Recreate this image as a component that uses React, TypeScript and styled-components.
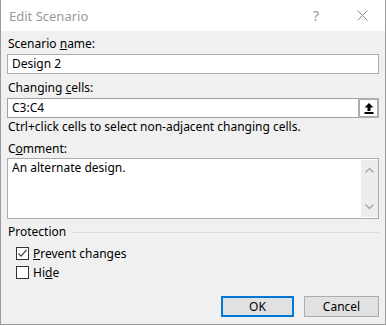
import React from 'react'
import styled, { createGlobalStyle } from 'styled-components'

const GlobalStyle = createGlobalStyle`
  html, body {
    margin: 0;
    padding: 0;
    background: #fff;
  }
  body {
    font-family: "Noto Sans", "Liberation Sans", sans-serif;
    font-size: 12px;
    color: #000;
  }
`

const UploadIcon = () => (
  <svg width="10" height="11" viewBox="0 0 10 11">
    <path d="M5 0 L9.5 4.5 L6.5 4.5 L6.5 8 L3.5 8 L3.5 4.5 L0.5 4.5 Z" fill="#000" />
    <rect x="0.5" y="9" width="9" height="2" fill="#000" />
  </svg>
)

const Chevron = ({ up }: { up?: boolean }) => (
  <svg width="9" height="6" viewBox="0 0 9 6">
    <path d={up ? 'M0.5 5.5 L4.5 1.5 L8.5 5.5' : 'M0.5 0.5 L4.5 4.5 L8.5 0.5'} stroke="#a6a6a6" strokeWidth="1.4" fill="none" />
  </svg>
)

const Check = () => (
  <svg width="11" height="11" viewBox="0 0 11 11">
    <path d="M1.5 5.5 L4 8.2 L9.5 2" stroke="#444" strokeWidth="1.2" fill="none" />
  </svg>
)

const App = () => {
  return (
    <>
      <GlobalStyle />
      <Dialog>
        <TitleBar>
          <Title>Edit Scenario</Title>
          <TitleButtons>
            <HelpGlyph>?</HelpGlyph>
            <svg width="11" height="11" viewBox="0 0 11 11">
              <path d="M0.5 0.5 L10.5 10.5 M10.5 0.5 L0.5 10.5" stroke="#8a8a8a" strokeWidth="1" fill="none" />
            </svg>
          </TitleButtons>
        </TitleBar>
        <Body>
          <Label>
            Scenario <u>n</u>ame:
          </Label>
          <TextBox>Design 2</TextBox>

          <Label $top={6}>
            Changing <u>c</u>ells:
          </Label>
          <RefBox>
            <RefValue>C3:C4</RefValue>
            <PickButton>
              <UploadIcon />
            </PickButton>
          </RefBox>
          <Hint>Ctrl+click cells to select non-adjacent changing cells.</Hint>

          <Label $top={6}>
            C<u>o</u>mment:
          </Label>
          <CommentBox>
            <CommentText>An alternate design.</CommentText>
            <ScrollBar>
              <Chevron up />
              <Chevron />
            </ScrollBar>
          </CommentBox>

          <GroupHeader>
            <span>Protection</span>
            <GroupLine />
          </GroupHeader>
          <CheckRow $top={4}>
            <CheckBox>
              <Check />
            </CheckBox>
            <span>
              <u>P</u>revent changes
            </span>
          </CheckRow>
          <CheckRow>
            <CheckBox />
            <span>
              Hi<u>d</u>e
            </span>
          </CheckRow>

          <Footer>
            <Button $primary>OK</Button>
            <Button>Cancel</Button>
          </Footer>
        </Body>
      </Dialog>
    </>
  )
}

const Dialog = styled.div`
  width: 386px;
  height: 325px;
  box-sizing: border-box;
  border: 1px solid #9b9b9b;
  border-top: none;
  background: #f0f0f0;
  display: flex;
  flex-direction: column;
`

const TitleBar = styled.div`
  height: 31px;
  background: #fff;
  display: flex;
  align-items: center;
  justify-content: space-between;
  padding: 0 17px 0 8px;
`

const Title = styled.div`
  font-size: 13px;
  color: #999;
`

const TitleButtons = styled.div`
  display: flex;
  align-items: center;
  gap: 38px;
`

const HelpGlyph = styled.span`
  font-size: 14px;
  color: #999;
`

const Body = styled.div`
  display: flex;
  flex-direction: column;
  padding: 5px 6px 0 6px;
`

const Label = styled.div<{ $top?: number }>`
  line-height: 16px;
  padding-left: 1px;
  margin-top: ${(p) => p.$top || 0}px;
  margin-bottom: 2px;
`

const TextBox = styled.div`
  height: 20px;
  box-sizing: border-box;
  border: 1px solid #acacac;
  background: #fff;
  padding: 0 4px;
  line-height: 18px;
`

const RefBox = styled.div`
  height: 20px;
  box-sizing: border-box;
  border: 1px solid #a0a0a0;
  background: #fff;
  display: flex;
  align-items: stretch;
`

const RefValue = styled.div`
  flex: 1;
  padding: 0 4px;
  line-height: 18px;
`

const PickButton = styled.div`
  width: 21px;
  box-sizing: border-box;
  border: 2px solid #adadad;
  margin: -1px -1px -1px 0;
  background: #fff;
  display: flex;
  align-items: center;
  justify-content: center;
`

const Hint = styled.div`
  line-height: 16px;
  padding-left: 1px;
  margin-top: 1px;
`

const CommentBox = styled.div`
  height: 61px;
  box-sizing: border-box;
  border: 1px solid #acacac;
  background: #fff;
  display: flex;
  margin-top: -1px;
`

const CommentText = styled.div`
  flex: 1;
  padding: 1px 4px;
  line-height: 16px;
`

const ScrollBar = styled.div`
  width: 17px;
  margin: 1px 0;
  background: #ededed;
  display: flex;
  flex-direction: column;
  align-items: center;
  justify-content: space-between;
  padding: 7px 0;
  box-sizing: border-box;
`

const GroupHeader = styled.div`
  display: flex;
  align-items: center;
  gap: 6px;
  line-height: 16px;
  padding-left: 1px;
  margin-top: 5px;
`

const GroupLine = styled.div`
  flex: 1;
  height: 1px;
  background: #dcdcdc;
`

const CheckRow = styled.div<{ $top?: number }>`
  display: flex;
  align-items: center;
  gap: 4px;
  height: 19px;
  padding-left: 9px;
  margin-top: ${(p) => p.$top || 0}px;
`

const CheckBox = styled.div`
  width: 13px;
  height: 13px;
  box-sizing: border-box;
  border: 1px solid #333;
  background: #fff;
  display: flex;
  align-items: center;
  justify-content: center;
`

const Footer = styled.div`
  display: flex;
  justify-content: flex-end;
  gap: 10px;
  margin-top: 14px;
`

const Button = styled.div<{ $primary?: boolean }>`
  width: ${(p) => (p.$primary ? 73 : 75)}px;
  height: 21px;
  box-sizing: border-box;
  background: #e1e1e1;
  border: ${(p) => (p.$primary ? '2px solid #0078d7' : '1px solid #adadad')};
  display: flex;
  align-items: center;
  justify-content: center;
`

export default App
